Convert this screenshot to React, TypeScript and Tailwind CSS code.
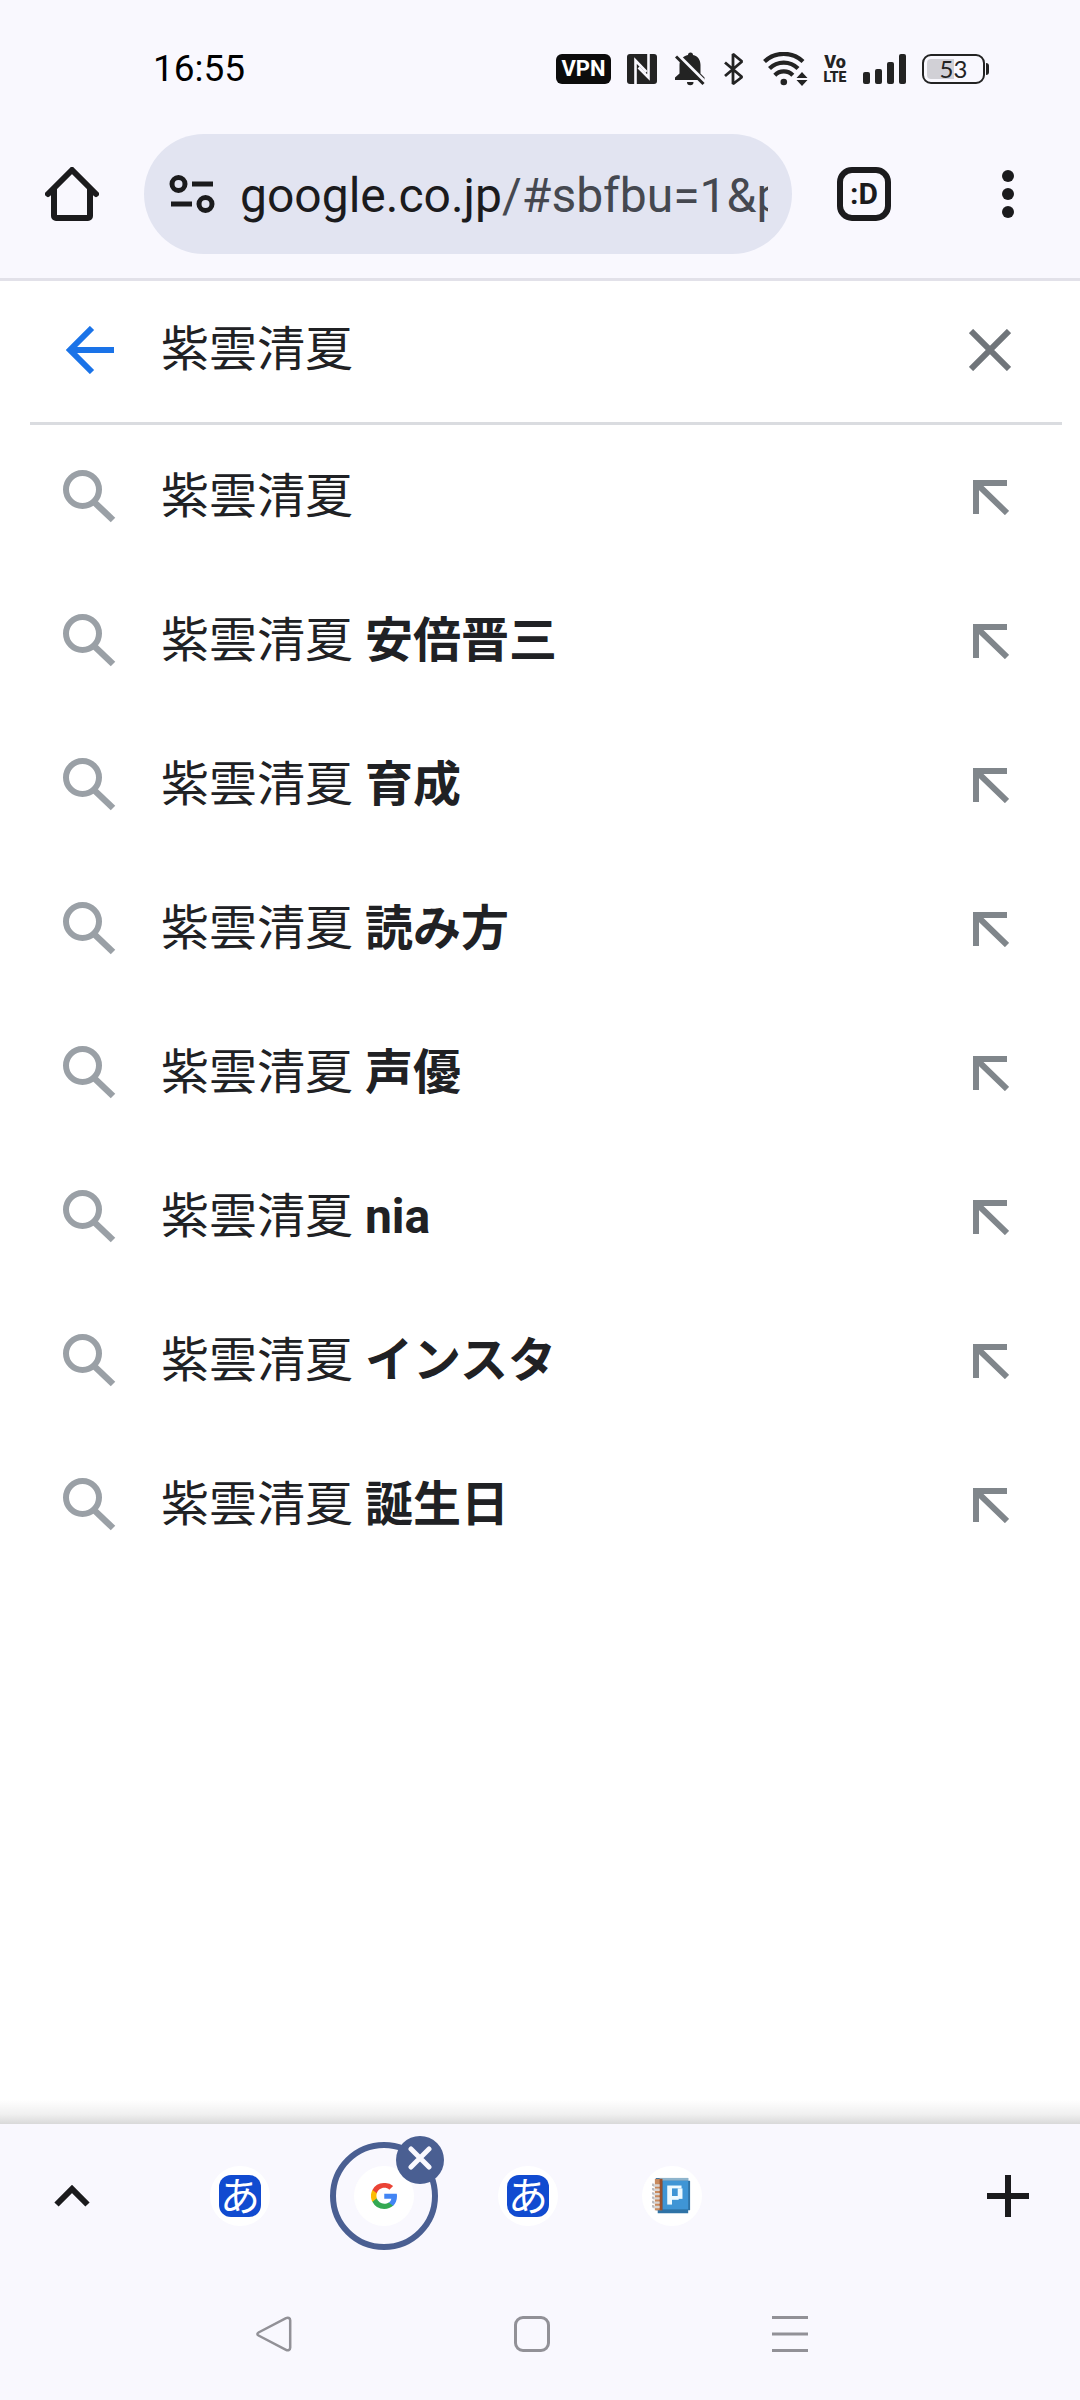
import { useState } from "react";

// ============================================
// Mobile browser with the search suggestions open
// ============================================

const suggestions = [
  { id: 1, query: "紫雲清夏", extra: "" },
  { id: 2, query: "紫雲清夏", extra: "安倍晋三" },
  { id: 3, query: "紫雲清夏", extra: "育成" },
  { id: 4, query: "紫雲清夏", extra: "読み方" },
  { id: 5, query: "紫雲清夏", extra: "声優" },
  { id: 6, query: "紫雲清夏", extra: "nia" },
  { id: 7, query: "紫雲清夏", extra: "インスタ" },
  { id: 8, query: "紫雲清夏", extra: "誕生日" },
];

function StatusBar() {
  return (
    <div className="flex h-[110px] items-center justify-between pt-7 pr-[91px] pl-[153px] text-[#232323]">
      <time className="text-[37px] leading-10 text-black">16:55</time>
      <div className="flex items-center">
        <span className="flex h-[30px] w-[55px] items-center justify-center rounded-md bg-[#0c0c0c] text-[22px] leading-none font-bold text-white">
          VPN
        </span>

        {/* NFC */}
        <svg className="ml-4 h-[30px] w-[30px]" viewBox="0 0 30 30" fill="none" aria-hidden="true">
          <rect width="30" height="30" rx="3" fill="#232323" />
          <path d="M8.500 30V6.500L19.500 18" stroke="#f9f8fe" strokeWidth="2.600" />
          <path d="M21.500 0V23.500L11.500 13.500" stroke="#f9f8fe" strokeWidth="2.600" />
        </svg>

        {/* Muted bell */}
        <svg className="ml-[18px] h-[34px] w-[30px]" viewBox="0 0 30 34" fill="none" aria-hidden="true">
          <path
            d="M13 3a2.500 2.500 0 0 1 5 0c5 1.200 7.500 5 7.500 10v8.500l4 4V28H0v-2.500l4.500-4V13c0-5 3.500-8.800 8.500-10z"
            fill="#232323"
          />
          <path d="M12 30h6.500a3.200 3.200 0 0 1-6.500 0z" fill="#232323" />
          <path d="M0 1 30 31" stroke="#f9f8fe" strokeWidth="5" />
          <path d="M1 4.500 28.500 32" stroke="#232323" strokeWidth="3" />
        </svg>

        {/* Bluetooth */}
        <svg className="ml-[18px] h-[34px] w-[22px]" viewBox="0 0 22 34" fill="none" aria-hidden="true">
          <path
            d="M2 10.500 19 25 10 32V2l9 7.500L2 24"
            stroke="#232323"
            strokeWidth="2.800"
            strokeLinejoin="bevel"
          />
        </svg>

        {/* Wi-Fi */}
        <svg className="ml-[18px] h-[34px] w-[46px]" viewBox="0 0 46 34" fill="none" aria-hidden="true">
          <path d="M1.500 9.500a28 28 0 0 1 38.500 0" stroke="#232323" strokeWidth="4.200" />
          <path d="M6.500 16.500a20 20 0 0 1 28.500 0" stroke="#232323" strokeWidth="4.200" />
          <path d="M11.800 23.200a12.500 12.500 0 0 1 18 0" stroke="#232323" strokeWidth="4.200" />
          <circle cx="20.800" cy="30" r="3.300" fill="#232323" />
          <path d="M39 20l5.500 6h-11zM39 34l5.500-6h-11z" fill="#232323" />
        </svg>

        <span className="ml-[14px] flex w-6 flex-col items-center font-black">
          <span className="text-[18px] leading-4">Vo</span>
          <span className="text-[14px] leading-[14px]">LTE</span>
        </span>

        {/* Signal strength */}
        <svg className="ml-4 h-[30px] w-[43px]" viewBox="0 0 43 30" fill="#232323" aria-hidden="true">
          <rect y="18" width="7" height="12" rx="2" />
          <rect x="12" y="15" width="7" height="15" rx="2" />
          <rect x="24" y="8" width="7" height="22" rx="2" />
          <rect x="36" width="7" height="30" rx="2" />
        </svg>

        <div className="ml-4 flex items-center gap-px">
          <div className="flex h-[30px] w-[63px] items-center rounded-[9px] border-2 border-[#232323] bg-linear-to-r from-[#d1d0d6] from-50% to-transparent to-50% bg-clip-content p-[3px]">
            <span className="w-full text-center font-[Lato,sans-serif] text-[24px] leading-5">53</span>
          </div>
          <div className="h-3 w-[3px] rounded-r-sm bg-[#232323]" />
        </div>
      </div>
    </div>
  );
}

function Toolbar() {
  return (
    <header className="border-b-[3px] border-[#e2e1e9]">
      <div className="flex h-[168px] items-center text-[#1b1b1d]">
        <button className="flex h-full w-36 items-center justify-center" aria-label="ホーム">
          <svg className="h-[54px] w-[54px]" viewBox="0 0 54 54" fill="none" aria-hidden="true">
            <path
              d="M3 27 27 3l24 24M9 22v27a2 2 0 0 0 2 2h32a2 2 0 0 0 2-2V22"
              stroke="currentColor"
              strokeWidth="6"
              strokeLinecap="round"
              strokeLinejoin="round"
            />
          </svg>
        </button>

        <button
          className="flex h-[120px] min-w-0 flex-1 items-center rounded-full bg-[#e2e4f1] pr-6 pl-[25px] text-left"
          aria-label="アドレスバー"
        >
          <svg className="h-10 w-[46px] shrink-0" viewBox="0 0 46 40" fill="none" aria-hidden="true">
            <g stroke="currentColor" strokeWidth="5">
              <circle cx="9.500" cy="10" r="6.500" />
              <circle cx="36.500" cy="30" r="6.500" />
              <path d="M23 10h21M2 30h21" />
            </g>
          </svg>
          <span className="ml-[25px] min-w-0 flex-1 overflow-hidden pt-1 text-[48px] leading-[60px] whitespace-nowrap">
            google.co.jp<span className="text-[#454850]">/#sbfbu=1&amp;p</span>
          </span>
        </button>

        <button className="flex h-full w-36 items-center justify-center" aria-label="タブを切り替え">
          <span className="flex h-[54px] w-[54px] items-center justify-center rounded-[15px] border-6 border-current text-[30px] leading-none font-bold">
            :D
          </span>
        </button>
        <button className="flex h-full w-36 items-center justify-center" aria-label="メニュー">
          <svg className="h-12 w-3" viewBox="0 0 12 48" fill="currentColor" aria-hidden="true">
            <circle cx="6" cy="6" r="6" />
            <circle cx="6" cy="24" r="6" />
            <circle cx="6" cy="42" r="6" />
          </svg>
        </button>
      </div>
    </header>
  );
}

function SearchBox() {
  const [query, setQuery] = useState("紫雲清夏");

  return (
    <form className="mr-[18px] ml-[30px] border-b-[3px] border-[#dadce0]" role="search">
      <div className="flex h-[141px] items-center pb-[3px]">
        <button type="button" className="flex w-[131px] shrink-0 pl-9" aria-label="戻る">
          <svg className="h-12 w-12" viewBox="0 0 48 48" fill="none" aria-hidden="true">
            <path d="M26 2 4 24l22 22M4 24h44" stroke="#1a73e8" strokeWidth="6" />
          </svg>
        </button>
        <input
          className="min-w-0 flex-1 bg-transparent text-[48px] leading-[60px] text-[#202124] outline-none"
          aria-label="検索"
          value={query}
          onChange={(e) => setQuery(e.target.value)}
        />
        <button
          type="button"
          className="mr-[51px]"
          aria-label="クリア"
          onClick={() => setQuery("")}
        >
          <svg className="h-[42px] w-[42px]" viewBox="0 0 42 42" fill="none" aria-hidden="true">
            <path d="M2 2l38 38M40 2 2 40" stroke="#70757a" strokeWidth="6" />
          </svg>
        </button>
      </div>
    </form>
  );
}

function SuggestionRow({ query, extra }: { query: string; extra: string }) {
  return (
    <li className="flex h-36 items-center">
      <button className="flex min-w-0 flex-1 items-center pl-[62px] text-left text-[48px] leading-[60px] text-[#202124]">
        <svg className="mr-[45px] h-[54px] w-[54px] shrink-0" viewBox="0 0 54 54" fill="none" aria-hidden="true">
          <circle cx="20.500" cy="19.500" r="16.500" stroke="#9aa0a6" strokeWidth="6" />
          <path d="M31 31 51 50" stroke="#9aa0a6" strokeWidth="6.500" />
        </svg>
        <span className="truncate">
          {query} <b className="font-bold">{extra}</b>
        </span>
      </button>
      <button className="mr-[71px] shrink-0" aria-label={`${query} ${extra}`.trim()}>
        <svg className="h-9 w-9" viewBox="0 0 36 36" fill="none" aria-hidden="true">
          <path d="M3 35V4h31M3 4l31 30" stroke="#80868b" strokeWidth="6" />
        </svg>
      </button>
    </li>
  );
}

function KanaFavicon() {
  return (
    <span className="flex h-[42px] w-[42px] items-center justify-center rounded-xl bg-[#114bd0] pb-1 font-['Noto_Sans_CJK_JP',sans-serif] text-[40px] leading-[42px] text-white">
      あ
    </span>
  );
}

function GoogleFavicon() {
  return (
    <svg className="h-[26px] w-[26px]" viewBox="2 2 20 20" aria-hidden="true">
      <path
        fill="#4285F4"
        d="M22 12.230c0-.7-.06-1.370-.18-2.020H12.200v3.820h5.500a4.700 4.700 0 0 1-2.040 3.080v2.560h3.300C20.890 17.900 22 15.300 22 12.230z"
      />
      <path
        fill="#34A853"
        d="M12.200 22c2.750 0 5.060-.9 6.750-2.440l-3.300-2.560c-.91.610-2.080.98-3.450.98-2.660 0-4.910-1.800-5.710-4.210H3.080v2.640A10.200 10.200 0 0 0 12.200 22z"
      />
      <path
        fill="#FBBC05"
        d="M6.490 13.770a6.020 6.020 0 0 1 0-3.840V7.290H3.080a10.030 10.030 0 0 0 0 9.120z"
      />
      <path
        fill="#EA4335"
        d="M12.200 5.720c1.500 0 2.840.51 3.900 1.520l2.930-2.920A9.870 9.870 0 0 0 12.200 2 10.200 10.200 0 0 0 3.080 7.290l3.410 2.640c.8-2.410 3.050-4.210 5.710-4.210z"
      />
    </svg>
  );
}

function PixelBookFavicon() {
  return (
    <svg className="h-10 w-10" viewBox="1 0 42 42" aria-hidden="true">
      <path d="M5 2h34v3h2v31h-2v3H7v-3H5z" fill="#2f73a6" />
      <path d="M9 2h30v3H9z" fill="#8fb5cc" />
      <path d="M12 5h27v30H12z" fill="#3f95d5" />
      <path d="M4 3h7v33H4z" fill="#c88a5e" />
      <path d="M9 3h3v33H9z" fill="#96502f" />
      <path
        d="M2 10h7M2 14.500h7M2 19h7M2 23.500h7M2 28h7M2 32.500h7"
        stroke="#d8d5d4"
        strokeWidth="2.500"
      />
      <path d="M2 8v27" stroke="#aaa9ad" strokeWidth="1.500" strokeDasharray="2.500 2" />
      {/* pixel emblem on the cover */}
      <rect x="17" y="10" width="5" height="20" fill="#eefaff" />
      <rect x="22" y="10" width="10" height="3" fill="#eefaff" />
      <rect x="28" y="13" width="5" height="11" fill="#eefaff" />
      <rect x="22" y="21" width="7" height="4" fill="#eefaff" />
    </svg>
  );
}

const tabs = [
  { id: 1, label: "タブ 1", Icon: KanaFavicon },
  { id: 2, label: "Google", Icon: GoogleFavicon, active: true },
  { id: 3, label: "タブ 3", Icon: KanaFavicon },
  { id: 4, label: "タブ 4", Icon: PixelBookFavicon },
];

function TabStrip() {
  return (
    <div className="relative flex h-36 items-center text-[#1b1b1d]">
      <div className="pointer-events-none absolute inset-x-0 bottom-full h-6 bg-linear-to-t from-[#d9d9d9] via-[#f0f0f0] via-40% to-white" />
      <button className="flex h-full w-36 items-center justify-center" aria-label="タブ一覧を開く">
        <svg className="h-6 w-9" viewBox="0 0 36 24" fill="none" aria-hidden="true">
          <path d="M2.500 20.500 18 5l15.500 15.500" stroke="currentColor" strokeWidth="6" />
        </svg>
      </button>
      <div className="flex flex-1 pl-6">
        {tabs.map(({ id, label, Icon, active }) => (
          <div key={id} className="relative flex h-36 w-36 items-center justify-center">
            <button
              className={
                active
                  ? "flex h-[108px] w-[108px] items-center justify-center rounded-full border-6 border-[#4a5f92]"
                  : "flex h-[108px] w-[108px] items-center justify-center"
              }
              aria-label={label}
            >
              <span className="flex h-[60px] w-[60px] items-center justify-center rounded-full bg-white">
                <Icon />
              </span>
            </button>
            {active && (
              <button
                className="absolute top-3 right-3 flex h-12 w-12 items-center justify-center rounded-full bg-[#4a5f92]"
                aria-label="タブを閉じる"
              >
                <svg className="mb-1 h-6 w-6" viewBox="0 0 24 24" fill="none" aria-hidden="true">
                  <path
                    d="M3 3l18 18M21 3 3 21"
                    stroke="#f9f8fe"
                    strokeWidth="5"
                    strokeLinecap="round"
                  />
                </svg>
              </button>
            )}
          </div>
        ))}
      </div>
      <button className="flex h-full w-36 items-center justify-center" aria-label="新しいタブ">
        <svg className="h-[42px] w-[42px]" viewBox="0 0 42 42" fill="none" aria-hidden="true">
          <path d="M21 0v42M0 21h42" stroke="currentColor" strokeWidth="6" />
        </svg>
      </button>
    </div>
  );
}

function SystemNav() {
  return (
    <nav className="flex h-[132px] items-center justify-center pr-4 text-[#929197]">
      <button className="flex h-full w-[258px] items-center justify-center" aria-label="戻る">
        <svg className="h-9 w-9" viewBox="0 0 36 36" fill="none" aria-hidden="true">
          <path
            d="M2.500 16.500 30 2.200c2-1 4.200-.2 4.200 2v27.600c0 2.200-2.200 3-4.200 2L2.500 19.500c-1.500-.8-1.500-2.200 0-3z"
            stroke="currentColor"
            strokeWidth="2.500"
          />
        </svg>
      </button>
      <button className="flex h-full w-[258px] items-center justify-center" aria-label="ホーム画面">
        <span className="h-9 w-9 rounded-[9px] border-3 border-current" />
      </button>
      <button className="flex h-full w-[258px] items-center justify-center" aria-label="アプリ履歴">
        <svg className="h-9 w-9" viewBox="0 0 36 36" fill="none" aria-hidden="true">
          <path d="M0 1.500h36M0 18h36M0 34.500h36" stroke="currentColor" strokeWidth="3" />
        </svg>
      </button>
    </nav>
  );
}

export default function App() {
  return (
    <div
      lang="ja"
      className="flex min-h-screen flex-col bg-[#f9f8fe] font-['Roboto','Noto_Sans_CJK_JP',sans-serif]"
    >
      <StatusBar />
      <Toolbar />
      <main className="flex-1 bg-white">
        <SearchBox />
        <ul>
          {suggestions.map((item) => (
            <SuggestionRow key={item.id} query={item.query} extra={item.extra} />
          ))}
        </ul>
      </main>
      <footer>
        <TabStrip />
        <SystemNav />
      </footer>
    </div>
  );
}
